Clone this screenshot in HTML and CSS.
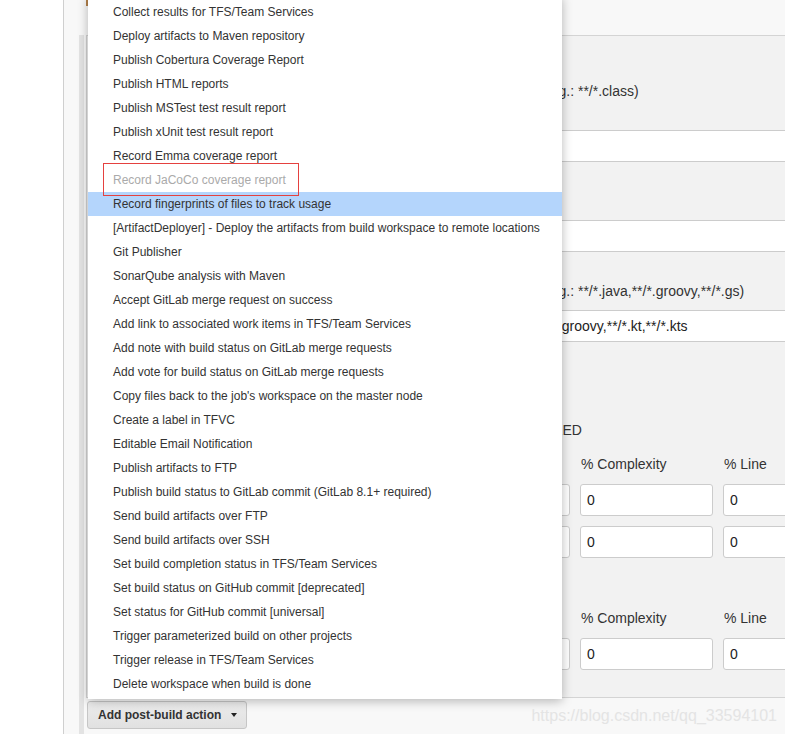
FILE: index.html
```html
<!DOCTYPE html>
<html lang="en">
<head>
<meta charset="utf-8">
<title>Post-build Actions</title>
<link rel="stylesheet" href="styles.css">
</head>
<body>
<div class="page">
  <div class="gutter"></div>
  <div class="main">
    <div class="tab-mark"></div>
    <div class="section">
      <div class="panel">
        <div class="hint hint-a">Inclusions (e.g.: **/*.class)</div>
        <input class="text-input" type="text" value="**/*.class">
        <div class="gap-row"><span class="side-label">Exclusions</span></div>
        <input class="text-input" type="text" value="">
        <div class="hint hint-b">Inclusions (e.g.: **/*.java,**/*.groovy,**/*.gs)</div>
        <input class="text-input" type="text" value="**/*.java,**/*.groovy,**/*.kt,**/*.kts">
        <label class="check"><span class="box"></span>Always run coverage collection, even if build is FAILED</label>
        <div class="thr thr-head">
          <span></span><span>% Instruction</span><span>% Branch</span><span>% Complexity</span><span>% Line</span><span>% Method</span><span>% Class</span>
        </div>
        <div class="thr thr-row">
          <span></span>
          <input class="num" type="text" value="0"><input class="num" type="text" value="0"><input class="num" type="text" value="0"><input class="num" type="text" value="0"><input class="num" type="text" value="0"><input class="num" type="text" value="0">
        </div>
        <div class="thr thr-row">
          <span></span>
          <input class="num" type="text" value="0"><input class="num" type="text" value="0"><input class="num" type="text" value="0"><input class="num" type="text" value="0"><input class="num" type="text" value="0"><input class="num" type="text" value="0">
        </div>
        <div class="thr thr-head thr-head-2">
          <span></span><span>% Instruction</span><span>% Branch</span><span>% Complexity</span><span>% Line</span><span>% Method</span><span>% Class</span>
        </div>
        <div class="thr thr-row">
          <span></span>
          <input class="num" type="text" value="0"><input class="num" type="text" value="0"><input class="num" type="text" value="0"><input class="num" type="text" value="0"><input class="num" type="text" value="0"><input class="num" type="text" value="0">
        </div>
      </div>
      <div class="actions">
        <button class="btn" type="button">Add post-build action<span class="caret"></span></button>
      </div>
    </div>

    <ul class="menu">
      <li>Collect results for TFS/Team Services</li>
      <li>Deploy artifacts to Maven repository</li>
      <li>Publish Cobertura Coverage Report</li>
      <li>Publish HTML reports</li>
      <li>Publish MSTest test result report</li>
      <li>Publish xUnit test result report</li>
      <li>Record Emma coverage report</li>
      <li class="disabled">Record JaCoCo coverage report</li>
      <li class="active">Record fingerprints of files to track usage</li>
      <li>[ArtifactDeployer] - Deploy the artifacts from build workspace to remote locations</li>
      <li>Git Publisher</li>
      <li>SonarQube analysis with Maven</li>
      <li>Accept GitLab merge request on success</li>
      <li>Add link to associated work items in TFS/Team Services</li>
      <li>Add note with build status on GitLab merge requests</li>
      <li>Add vote for build status on GitLab merge requests</li>
      <li>Copy files back to the job's workspace on the master node</li>
      <li>Create a label in TFVC</li>
      <li>Editable Email Notification</li>
      <li>Publish artifacts to FTP</li>
      <li>Publish build status to GitLab commit (GitLab 8.1+ required)</li>
      <li>Send build artifacts over FTP</li>
      <li>Send build artifacts over SSH</li>
      <li>Set build completion status in TFS/Team Services</li>
      <li>Set build status on GitHub commit [deprecated]</li>
      <li>Set status for GitHub commit [universal]</li>
      <li>Trigger parameterized build on other projects</li>
      <li>Trigger release in TFS/Team Services</li>
      <li>Delete workspace when build is done</li>
      <li class="mark" aria-hidden="true"></li>
    </ul>

    <div class="watermark">https://blog.csdn.net/qq_33594101</div>
  </div>
</div>
</body>
</html>
```

FILE: styles.css
```css
html, body {
  margin: 0;
  padding: 0;
  background: #fff;
}

body {
  font-family: "Liberation Sans", Arial, sans-serif;
}

.page {
  display: flex;
  height: 734px;
  overflow: hidden;
  background: #fff;
}

.gutter {
  flex: none;
  width: 63px;
  border-right: 1px solid #cfcfcf;
  background: #fff;
}

.main {
  flex: 1;
  min-width: 0;
  position: relative;
  overflow: hidden;
  background: #f8f8f8;
  padding-left: 15px;
}

.tab-mark {
  margin-left: 7px;
  width: 2px;
  height: 6px;
  margin-bottom: 29px;
  background: #b3814b;
}

.section {
  width: 1100px;
  border-left: 5px solid #e3e3e3;
  padding-left: 2px;
  min-height: 720px;
}

.panel {
  background: #f2f2f2;
  border-left: 1px solid #d3d3d3;
  border-top: 1px solid #d4d4d4;
  border-bottom: 1px solid #d4d4d4;
  padding-bottom: 27px;
}

.hint {
  font-size: 14px;
  line-height: 16px;
  color: #333;
  padding-left: 389px;
  white-space: nowrap;
}

.hint-a {
  padding-top: 47px;
  padding-bottom: 31px;
}

.hint-b {
  padding-top: 31px;
  padding-bottom: 11px;
}

.gap-row {
  height: 58px;
  font-size: 14px;
  line-height: 58px;
  color: #333;
}

.side-label {
  padding-left: 30px;
}

.text-input {
  display: block;
  box-sizing: border-box;
  width: 700px;
  height: 32px;
  margin: 0 0 0 389px;
  padding: 0 7px;
  border: 1px solid #ccc;
  border-radius: 0;
  background: #fff;
  font: 14px "Liberation Sans", Arial, sans-serif;
  color: #222;
  outline: none;
}

.check {
  display: flex;
  align-items: center;
  margin-top: 80px;
  padding-left: 135px;
  font-size: 14px;
  line-height: 16px;
  color: #333;
  white-space: nowrap;
}

.check .box {
  flex: none;
  width: 13px;
  height: 13px;
  box-sizing: border-box;
  margin-right: 6px;
  border: 1px solid #999;
  border-radius: 2px;
  background: #fff;
}

.thr {
  display: grid;
  grid-template-columns: 44px repeat(6, 133px);
  column-gap: 10px;
  padding-left: 153px;
}

.thr-head {
  margin-top: 18px;
  font-size: 14px;
  line-height: 16px;
  color: #333;
  white-space: nowrap;
}

.thr-head span {
  padding-left: 1px;
}

.thr-head-2 {
  margin-top: 52px;
}

.thr-row {
  margin-top: 12px;
}

.thr-row + .thr-row {
  margin-top: 10px;
}

.num {
  box-sizing: border-box;
  width: 133px;
  height: 32px;
  margin: 0;
  padding: 0 6px;
  border: 1px solid #ccc;
  border-radius: 3px;
  background: #fff;
  font: 14px "Liberation Sans", Arial, sans-serif;
  color: #222;
  outline: none;
}

.actions {
  padding: 3px 0 0 1px;
}

.btn {
  display: inline-flex;
  align-items: center;
  box-sizing: border-box;
  height: 28px;
  margin: 0;
  padding: 0 9px 0 10px;
  border: 1px solid #c6c6c6;
  border-radius: 3px;
  background: linear-gradient(#ececec, #e1e1e1);
  font: bold 12px "Liberation Sans", Arial, sans-serif;
  color: #333;
}

.caret {
  width: 0;
  height: 0;
  margin-left: 10px;
  border-left: 3.5px solid transparent;
  border-right: 3.5px solid transparent;
  border-top: 4px solid #222;
}

.menu {
  position: absolute;
  top: -4px;
  left: 24px;
  width: 474px;
  margin: 0;
  padding: 4px 0 3px;
  list-style: none;
  background: #fff;
  box-shadow: 0 2px 10px rgba(0, 0, 0, 0.28);
  font-size: 12px;
  line-height: 24px;
  color: #333;
}

.menu li {
  padding-left: 25px;
  white-space: nowrap;
}

.menu li.active {
  background: #b4d5fc;
}

.menu li.disabled {
  color: #aaa;
}

.menu li.mark {
  position: absolute;
  left: 15px;
  top: 167px;
  width: 196px;
  height: 33px;
  padding: 0;
  box-sizing: border-box;
  border: 1px solid #e5413f;
}

.watermark {
  position: absolute;
  right: 8px;
  bottom: 9px;
  font-size: 16px;
  line-height: 18px;
  color: #e4e4e4;
  white-space: nowrap;
}
```
